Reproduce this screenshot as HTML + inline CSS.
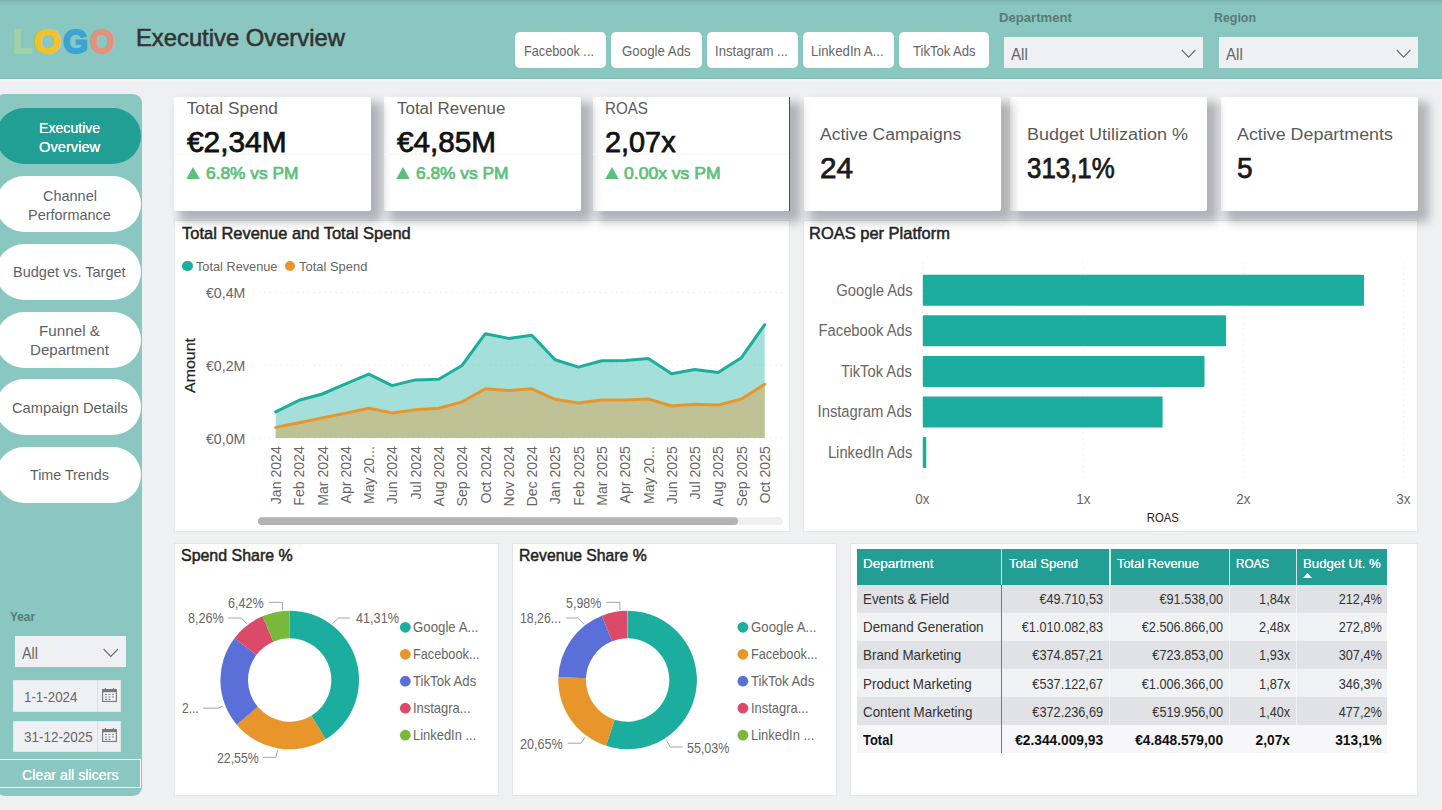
<!DOCTYPE html>
<html lang="en"><head><meta charset="utf-8"><title>Executive Overview</title>
<style>
html,body{margin:0;padding:0}body{width:1442px;height:810px;overflow:hidden;position:relative;background:#eff0f2;font-family:"Liberation Sans",sans-serif}
.b{position:absolute;display:block}
.t{position:absolute;white-space:nowrap;line-height:1;}
</style></head>
<body>
<div class="b" style="left:0px;top:0px;width:1442px;height:79px;background:linear-gradient(#79b1ad 0,#83bdb8 2px,#8ac7c1 5px,#8ac7c1 77.6px,#86bbb5 78.6px,#86bbb5 100%)"></div>
<div class="b" style="left:0px;top:79px;width:1442px;height:2px;background:linear-gradient(#f8fbfb,#eff0f2)"></div>
<div class="b" style="left:0;top:0;width:130px;height:70px">
<span class="t" style="left:12.7px;transform-origin:0 0;top:25.1px;font-size:33.8px;color:#a1d2a5;font-weight:bold;transform:scaleX(0.925);-webkit-text-stroke:2px #a1d2a5;">L</span>
<span class="t" style="left:33.9px;transform-origin:0 0;top:25.1px;font-size:33.8px;color:#f0c22b;font-weight:bold;transform:scaleX(1.031);-webkit-text-stroke:2px #f0c22b;">O</span>
<span class="t" style="left:62.6px;transform-origin:0 0;top:25.1px;font-size:33.8px;color:#3aa4d2;font-weight:bold;transform:scaleX(0.955);-webkit-text-stroke:2px #3aa4d2;">G</span>
<span class="t" style="left:89.6px;transform-origin:0 0;top:25.1px;font-size:33.8px;color:#e2937f;font-weight:bold;transform:scaleX(0.932);-webkit-text-stroke:2px #e2937f;">O</span>
</div>
<div class="t" style="left:136.0px;transform-origin:0 0;top:27.4px;font-size:23.4px;color:#333;-webkit-text-stroke:0.55px #333;transform:scaleX(1.017);">Executive Overview</div>
<div class="b" style="left:515.0px;top:32.3px;width:90.9px;height:35.3px;background:#fff;border-radius:5px"></div>
<div class="t" style="left:523.5px;transform-origin:0 0;top:43.8px;font-size:14.6px;color:#666;transform:scaleX(0.871);">Facebook ...</div>
<div class="b" style="left:610.9px;top:32.3px;width:90.9px;height:35.3px;background:#fff;border-radius:5px"></div>
<div class="t" style="left:622.3px;transform-origin:0 0;top:43.8px;font-size:14.6px;color:#666;transform:scaleX(0.911);">Google Ads</div>
<div class="b" style="left:706.8px;top:32.3px;width:90.9px;height:35.3px;background:#fff;border-radius:5px"></div>
<div class="t" style="left:715.0px;transform-origin:0 0;top:43.8px;font-size:14.6px;color:#666;transform:scaleX(0.900);">Instagram ...</div>
<div class="b" style="left:802.7px;top:32.3px;width:90.9px;height:35.3px;background:#fff;border-radius:5px"></div>
<div class="t" style="left:810.9px;transform-origin:0 0;top:43.8px;font-size:14.6px;color:#666;transform:scaleX(0.904);">LinkedIn A...</div>
<div class="b" style="left:898.6px;top:32.3px;width:90.9px;height:35.3px;background:#fff;border-radius:5px"></div>
<div class="t" style="left:912.8px;transform-origin:0 0;top:43.8px;font-size:14.6px;color:#666;transform:scaleX(0.894);">TikTok Ads</div>
<div class="t" style="left:999.0px;transform-origin:0 0;top:10.5px;font-size:13.2px;color:#587a77;font-weight:bold;transform:scaleX(0.995);">Department</div>
<div class="t" style="left:1213.7px;transform-origin:0 0;top:10.5px;font-size:13.2px;color:#587a77;font-weight:bold;transform:scaleX(0.939);">Region</div>
<div class="b" style="left:1003.8px;top:37.1px;width:198.9px;height:30.7px;background:#eff0f3"></div>
<div class="t" style="left:1011.0px;transform-origin:0 0;top:47.0px;font-size:15.6px;color:#666;transform:scaleX(0.969);">All</div>
<svg class="b" style="left:1180.6px;top:49px" width="16" height="10" viewBox="0 0 16 10"><path d="M0.8 1 L7.6 8.2 L14.4 1" fill="none" stroke="#6a6a6a" stroke-width="1.1"/></svg>
<div class="b" style="left:1218.7px;top:37.1px;width:198.9px;height:30.7px;background:#eff0f3"></div>
<div class="t" style="left:1225.9px;transform-origin:0 0;top:47.0px;font-size:15.6px;color:#666;transform:scaleX(0.969);">All</div>
<svg class="b" style="left:1395.5px;top:49px" width="16" height="10" viewBox="0 0 16 10"><path d="M0.8 1 L7.6 8.2 L14.4 1" fill="none" stroke="#6a6a6a" stroke-width="1.1"/></svg>
<div class="b" style="left:-4px;top:94.3px;width:146.2px;height:702px;background:#8ac7c1;border-radius:9px"></div>
<div class="b" style="left:-4px;top:108.1px;width:144.8px;height:56px;border-radius:28px;background:#229f95"></div>
<div class="t" style="left:38.8px;transform-origin:0 0;top:119.7px;font-size:15px;color:#fff;transform:scaleX(0.941);text-shadow:0 0 0.5px #fff;">Executive</div>
<div class="t" style="left:38.8px;transform-origin:0 0;top:138.9px;font-size:15px;color:#fff;transform:scaleX(0.979);text-shadow:0 0 0.5px #fff;">Overview</div>
<div class="b" style="left:-4px;top:175.9px;width:144.8px;height:56px;border-radius:28px;background:#fff"></div>
<div class="t" style="left:42.5px;transform-origin:0 0;top:187.5px;font-size:15px;color:#5f5f66;transform:scaleX(0.965);">Channel</div>
<div class="t" style="left:28.0px;transform-origin:0 0;top:206.7px;font-size:15px;color:#5f5f66;transform:scaleX(0.964);">Performance</div>
<div class="b" style="left:-4px;top:243.7px;width:144.8px;height:56px;border-radius:28px;background:#fff"></div>
<div class="t" style="left:13.1px;transform-origin:0 0;top:263.9px;font-size:15px;color:#5f5f66;transform:scaleX(0.967);">Budget vs. Target</div>
<div class="b" style="left:-4px;top:311.5px;width:144.8px;height:56px;border-radius:28px;background:#fff"></div>
<div class="t" style="left:39.0px;transform-origin:0 0;top:323.1px;font-size:15px;color:#5f5f66;transform:scaleX(1.014);">Funnel &amp;</div>
<div class="t" style="left:30.0px;transform-origin:0 0;top:342.3px;font-size:15px;color:#5f5f66;transform:scaleX(1.006);">Department</div>
<div class="b" style="left:-4px;top:379.3px;width:144.8px;height:56px;border-radius:28px;background:#fff"></div>
<div class="t" style="left:11.5px;transform-origin:0 0;top:399.5px;font-size:15px;color:#5f5f66;transform:scaleX(0.978);">Campaign Details</div>
<div class="b" style="left:-4px;top:447.1px;width:144.8px;height:56px;border-radius:28px;background:#fff"></div>
<div class="t" style="left:30.0px;transform-origin:0 0;top:467.3px;font-size:15px;color:#5f5f66;transform:scaleX(0.952);">Time Trends</div>
<div class="t" style="left:9.9px;transform-origin:0 0;top:609.6px;font-size:13.6px;color:#587a77;font-weight:bold;transform:scaleX(0.870);">Year</div>
<div class="b" style="left:14.8px;top:636px;width:110.9px;height:30.8px;background:#eff0f3"></div>
<div class="t" style="left:22.2px;transform-origin:0 0;top:645.6px;font-size:15.6px;color:#666;transform:scaleX(0.911);">All</div>
<svg class="b" style="left:103px;top:648px" width="16" height="10" viewBox="0 0 16 10"><path d="M0.6 1 L7.8 8.4 L15 1" fill="none" stroke="#6a6a6a" stroke-width="1.1"/></svg>
<div class="b" style="left:12.8px;top:680.4px;width:108.2px;height:31.3px;background:#eff0f3;box-shadow:inset 0 0 0 1px #e4e5e8"></div>
<div class="b" style="left:97.3px;top:680.4px;width:1px;height:31.3px;background:#dfe0e3"></div>
<div class="t" style="left:23.5px;transform-origin:0 0;top:689.6px;font-size:14.6px;color:#666;transform:scaleX(0.914);">1-1-2024</div>
<svg class="b" style="left:101.6px;top:687.8px" width="15" height="14" viewBox="0 0 15 14"><rect x="0.6" y="1.6" width="13.8" height="11.8" fill="none" stroke="#777" stroke-width="1.1"/><rect x="0.6" y="1.6" width="13.8" height="2.6" fill="#777"/><path d="M3.5 0v3M11.5 0v3" stroke="#777" stroke-width="1.2"/><path d="M3 6.5h2M6.5 6.5h2M10 6.5h2M3 9h2M6.5 9h2M10 9h2M3 11.3h2M6.5 11.3h2" stroke="#888" stroke-width="1.2"/></svg>
<div class="b" style="left:12.8px;top:720.9px;width:108.2px;height:31.3px;background:#eff0f3;box-shadow:inset 0 0 0 1px #e4e5e8"></div>
<div class="b" style="left:97.3px;top:720.9px;width:1px;height:31.3px;background:#dfe0e3"></div>
<div class="t" style="left:23.5px;transform-origin:0 0;top:730.1px;font-size:14.6px;color:#666;transform:scaleX(0.921);">31-12-2025</div>
<svg class="b" style="left:101.6px;top:728.3px" width="15" height="14" viewBox="0 0 15 14"><rect x="0.6" y="1.6" width="13.8" height="11.8" fill="none" stroke="#777" stroke-width="1.1"/><rect x="0.6" y="1.6" width="13.8" height="2.6" fill="#777"/><path d="M3.5 0v3M11.5 0v3" stroke="#777" stroke-width="1.2"/><path d="M3 6.5h2M6.5 6.5h2M10 6.5h2M3 9h2M6.5 9h2M10 9h2M3 11.3h2M6.5 11.3h2" stroke="#888" stroke-width="1.2"/></svg>
<div class="b" style="left:-2px;top:759.1px;width:143.4px;height:29.4px;border:1px solid #fff;box-sizing:border-box"></div>
<div class="t" style="left:21.6px;transform-origin:0 0;top:767.1px;font-size:15px;color:#fff;transform:scaleX(0.950);text-shadow:0 0 0.6px #fff">Clear all slicers</div>
<div class="b" style="left:174px;top:220px;width:615.5px;height:312px;background:#fff;border:1px solid #e3e5e9;box-sizing:border-box"></div>
<div class="b" style="left:802.5px;top:220px;width:615.5px;height:312px;background:#fff;border:1px solid #e3e5e9;box-sizing:border-box"></div>
<div class="b" style="left:174px;top:542.7px;width:324.5px;height:253.4px;background:#fff;border:1px solid #e3e5e9;box-sizing:border-box"></div>
<div class="b" style="left:512px;top:542.7px;width:324.5px;height:253.4px;background:#fff;border:1px solid #e3e5e9;box-sizing:border-box"></div>
<div class="b" style="left:850px;top:542.7px;width:568px;height:253.4px;background:#fff;border:1px solid #e3e5e9;box-sizing:border-box"></div>
<div class="b" style="left:1221px;top:97.1px;width:197px;height:113.5px;background:#fff;border-radius:2px;box-shadow:7.8px 7.8px 10px 2.6px rgba(10,12,30,0.265)"></div>
<div class="b" style="left:1010.3px;top:97.1px;width:197px;height:113.5px;background:#fff;border-radius:2px;box-shadow:7.8px 7.8px 10px 2.6px rgba(10,12,30,0.265)"></div>
<div class="b" style="left:804px;top:97.1px;width:197px;height:113.5px;background:#fff;border-radius:2px;box-shadow:7.8px 7.8px 10px 2.6px rgba(10,12,30,0.265)"></div>
<div class="b" style="left:593.3px;top:97.1px;width:197px;height:113.5px;background:#fff;border-radius:2px;box-shadow:7.8px 7.8px 10px 2.6px rgba(10,12,30,0.265)"></div>
<div class="b" style="left:384.3px;top:97.1px;width:197px;height:113.5px;background:#fff;border-radius:2px;box-shadow:7.8px 7.8px 10px 2.6px rgba(10,12,30,0.265)"></div>
<div class="b" style="left:174.3px;top:97.1px;width:197px;height:113.5px;background:#fff;border-radius:2px;box-shadow:7.8px 7.8px 10px 2.6px rgba(10,12,30,0.265)"></div>
<div class="b" style="left:174.3px;top:154px;width:197px;height:1px;background:#f8f8f8"></div>
<div class="t" style="left:186.7px;transform-origin:0 0;top:99.8px;font-size:17.3px;color:#5a5a5a;transform:scaleX(1.000);">Total Spend</div>
<div class="t" style="left:186.7px;transform-origin:0 0;top:127.5px;font-size:28.6px;color:#111;-webkit-text-stroke:0.75px #111;transform:scaleX(1.043);">€2,34M</div>
<svg class="b" style="left:186.1px;top:166.6px" width="14" height="12.4" viewBox="0 0 14 12.4"><path d="M7 0L14 12.4H0Z" fill="#5cc07a"/></svg>
<div class="t" style="left:205.9px;transform-origin:0 0;top:164.9px;font-size:16.4px;color:#5cc07a;-webkit-text-stroke:0.7px #5cc07a;transform:scaleX(1.058);">6.8% vs PM</div>
<div class="b" style="left:384.3px;top:154px;width:197px;height:1px;background:#f8f8f8"></div>
<div class="t" style="left:396.6px;transform-origin:0 0;top:99.8px;font-size:17.3px;color:#5a5a5a;transform:scaleX(0.981);">Total Revenue</div>
<div class="t" style="left:396.6px;transform-origin:0 0;top:127.5px;font-size:28.6px;color:#111;-webkit-text-stroke:0.75px #111;transform:scaleX(1.038);">€4,85M</div>
<svg class="b" style="left:396.0px;top:166.6px" width="14" height="12.4" viewBox="0 0 14 12.4"><path d="M7 0L14 12.4H0Z" fill="#5cc07a"/></svg>
<div class="t" style="left:415.8px;transform-origin:0 0;top:164.9px;font-size:16.4px;color:#5cc07a;-webkit-text-stroke:0.7px #5cc07a;transform:scaleX(1.058);">6.8% vs PM</div>
<div class="b" style="left:593.3px;top:154px;width:197px;height:1px;background:#f8f8f8"></div>
<div class="t" style="left:605.2px;transform-origin:0 0;top:99.8px;font-size:17.3px;color:#5a5a5a;transform:scaleX(0.877);">ROAS</div>
<div class="t" style="left:605.2px;transform-origin:0 0;top:127.5px;font-size:28.6px;color:#111;-webkit-text-stroke:0.75px #111;transform:scaleX(1.009);">2,07x</div>
<svg class="b" style="left:604.6px;top:166.6px" width="14" height="12.4" viewBox="0 0 14 12.4"><path d="M7 0L14 12.4H0Z" fill="#5cc07a"/></svg>
<div class="t" style="left:624.4px;transform-origin:0 0;top:164.9px;font-size:16.4px;color:#5cc07a;-webkit-text-stroke:0.7px #5cc07a;transform:scaleX(1.071);">0.00x vs PM</div>
<div class="b" style="left:788.8px;top:97.1px;width:1.4px;height:113.5px;background:#4a4a4a"></div>
<div class="t" style="left:820.4px;transform-origin:0 0;top:125.9px;font-size:17.3px;color:#5a5a5a;transform:scaleX(1.014);">Active Campaigns</div>
<div class="t" style="left:820.4px;transform-origin:0 0;top:153.8px;font-size:28.6px;color:#1a1a1a;-webkit-text-stroke:0.75px #1a1a1a;transform:scaleX(1.037);">24</div>
<div class="t" style="left:1026.6px;transform-origin:0 0;top:125.9px;font-size:17.3px;color:#5a5a5a;transform:scaleX(1.041);">Budget Utilization %</div>
<div class="t" style="left:1026.6px;transform-origin:0 0;top:153.8px;font-size:28.6px;color:#1a1a1a;-webkit-text-stroke:0.75px #1a1a1a;transform:scaleX(0.904);">313,1%</div>
<div class="t" style="left:1237.3px;transform-origin:0 0;top:125.9px;font-size:17.3px;color:#5a5a5a;transform:scaleX(1.034);">Active Departments</div>
<div class="t" style="left:1237.3px;transform-origin:0 0;top:153.8px;font-size:28.6px;color:#1a1a1a;-webkit-text-stroke:0.75px #1a1a1a;transform:scaleX(0.981);">5</div>
<div class="t" style="left:181.8px;transform-origin:0 0;top:225.0px;font-size:16.2px;color:#252423;-webkit-text-stroke:0.5px #252423;transform:scaleX(1.018);">Total Revenue and Total Spend</div>
<div class="b" style="left:182px;top:260.6px;width:10.6px;height:10.6px;border-radius:50%;background:#1bae9f"></div>
<div class="t" style="left:196.2px;transform-origin:0 0;top:259.5px;font-size:13.4px;color:#686664;transform:scaleX(0.951);">Total Revenue</div>
<div class="b" style="left:284.5px;top:260.6px;width:10.6px;height:10.6px;border-radius:50%;background:#e8962c"></div>
<div class="t" style="left:298.6px;transform-origin:0 0;top:259.5px;font-size:13.4px;color:#686664;transform:scaleX(0.966);">Total Spend</div>
<div class="t" style="left:206.2px;transform-origin:0 0;top:285.6px;font-size:14.2px;color:#686664;transform:scaleX(0.996);">€0,4M</div>
<div class="t" style="left:206.2px;transform-origin:0 0;top:358.6px;font-size:14.2px;color:#686664;transform:scaleX(0.996);">€0,2M</div>
<div class="t" style="left:206.2px;transform-origin:0 0;top:431.6px;font-size:14.2px;color:#686664;transform:scaleX(0.996);">€0,0M</div>
<svg class="b" style="left:0;top:0" width="1442" height="810" viewBox="0 0 1442 810"><line x1="253" x2="783" y1="292.4" y2="292.4" stroke="#ececec" stroke-width="1" stroke-dasharray="1.5 4"/><line x1="253" x2="783" y1="365.2" y2="365.2" stroke="#ececec" stroke-width="1" stroke-dasharray="1.5 4"/><line x1="253" x2="783" y1="438" y2="438" stroke="#ececec" stroke-width="1" stroke-dasharray="1.5 4"/><polygon points="275.7,438 275.7,411.9 299.0,400.3 322.3,394.0 345.6,383.9 368.8,374.1 392.1,385.6 415.4,379.9 438.7,379.3 462.0,365.5 485.3,333.7 508.6,338.4 531.8,335.2 555.1,359.8 578.4,367.1 601.7,360.8 625.0,360.4 648.3,358.5 671.6,373.8 694.8,369.6 718.1,372.4 741.4,357.7 764.7,324.7 764.7,438" fill="#1bae9f" fill-opacity="0.4"/><polygon points="275.7,438 275.7,427.4 299.0,422.8 322.3,417.9 345.6,413.1 368.8,408.3 392.1,412.9 415.4,409.8 438.7,408.3 462.0,402.0 485.3,388.8 508.6,390.4 531.8,388.8 555.1,399.3 578.4,403.0 601.7,400.1 625.0,399.9 648.3,399.0 671.6,406.0 694.8,404.3 718.1,405.1 741.4,399.0 764.7,384.3 764.7,438" fill="#e8962c" fill-opacity="0.4"/><polyline points="275.7,411.9 299.0,400.3 322.3,394.0 345.6,383.9 368.8,374.1 392.1,385.6 415.4,379.9 438.7,379.3 462.0,365.5 485.3,333.7 508.6,338.4 531.8,335.2 555.1,359.8 578.4,367.1 601.7,360.8 625.0,360.4 648.3,358.5 671.6,373.8 694.8,369.6 718.1,372.4 741.4,357.7 764.7,324.7" fill="none" stroke="#1bae9f" stroke-width="3" stroke-linejoin="round" stroke-linecap="round"/><polyline points="275.7,427.4 299.0,422.8 322.3,417.9 345.6,413.1 368.8,408.3 392.1,412.9 415.4,409.8 438.7,408.3 462.0,402.0 485.3,388.8 508.6,390.4 531.8,388.8 555.1,399.3 578.4,403.0 601.7,400.1 625.0,399.9 648.3,399.0 671.6,406.0 694.8,404.3 718.1,405.1 741.4,399.0 764.7,384.3" fill="none" stroke="#e8962c" stroke-width="3" stroke-linejoin="round" stroke-linecap="round"/><text transform="translate(281.0,446.2) rotate(-90)" text-anchor="end" font-size="14.6" fill="#686664" textLength="58.0" lengthAdjust="spacingAndGlyphs">Jan 2024</text><text transform="translate(304.3,446.2) rotate(-90)" text-anchor="end" font-size="14.6" fill="#686664" textLength="59.5" lengthAdjust="spacingAndGlyphs">Feb 2024</text><text transform="translate(327.6,446.2) rotate(-90)" text-anchor="end" font-size="14.6" fill="#686664" textLength="59.5" lengthAdjust="spacingAndGlyphs">Mar 2024</text><text transform="translate(350.9,446.2) rotate(-90)" text-anchor="end" font-size="14.6" fill="#686664" textLength="57.2" lengthAdjust="spacingAndGlyphs">Apr 2024</text><text transform="translate(374.1,446.2) rotate(-90)" text-anchor="end" font-size="14.6" fill="#686664" textLength="57.9" lengthAdjust="spacingAndGlyphs">May 20...</text><text transform="translate(397.4,446.2) rotate(-90)" text-anchor="end" font-size="14.6" fill="#686664" textLength="58.0" lengthAdjust="spacingAndGlyphs">Jun 2024</text><text transform="translate(420.7,446.2) rotate(-90)" text-anchor="end" font-size="14.6" fill="#686664" textLength="53.3" lengthAdjust="spacingAndGlyphs">Jul 2024</text><text transform="translate(444.0,446.2) rotate(-90)" text-anchor="end" font-size="14.6" fill="#686664" textLength="60.3" lengthAdjust="spacingAndGlyphs">Aug 2024</text><text transform="translate(467.3,446.2) rotate(-90)" text-anchor="end" font-size="14.6" fill="#686664" textLength="60.3" lengthAdjust="spacingAndGlyphs">Sep 2024</text><text transform="translate(490.6,446.2) rotate(-90)" text-anchor="end" font-size="14.6" fill="#686664" textLength="57.2" lengthAdjust="spacingAndGlyphs">Oct 2024</text><text transform="translate(513.9,446.2) rotate(-90)" text-anchor="end" font-size="14.6" fill="#686664" textLength="60.3" lengthAdjust="spacingAndGlyphs">Nov 2024</text><text transform="translate(537.1,446.2) rotate(-90)" text-anchor="end" font-size="14.6" fill="#686664" textLength="60.3" lengthAdjust="spacingAndGlyphs">Dec 2024</text><text transform="translate(560.4,446.2) rotate(-90)" text-anchor="end" font-size="14.6" fill="#686664" textLength="58.0" lengthAdjust="spacingAndGlyphs">Jan 2025</text><text transform="translate(583.7,446.2) rotate(-90)" text-anchor="end" font-size="14.6" fill="#686664" textLength="59.5" lengthAdjust="spacingAndGlyphs">Feb 2025</text><text transform="translate(607.0,446.2) rotate(-90)" text-anchor="end" font-size="14.6" fill="#686664" textLength="59.5" lengthAdjust="spacingAndGlyphs">Mar 2025</text><text transform="translate(630.3,446.2) rotate(-90)" text-anchor="end" font-size="14.6" fill="#686664" textLength="57.2" lengthAdjust="spacingAndGlyphs">Apr 2025</text><text transform="translate(653.6,446.2) rotate(-90)" text-anchor="end" font-size="14.6" fill="#686664" textLength="57.9" lengthAdjust="spacingAndGlyphs">May 20...</text><text transform="translate(676.9,446.2) rotate(-90)" text-anchor="end" font-size="14.6" fill="#686664" textLength="58.0" lengthAdjust="spacingAndGlyphs">Jun 2025</text><text transform="translate(700.1,446.2) rotate(-90)" text-anchor="end" font-size="14.6" fill="#686664" textLength="53.3" lengthAdjust="spacingAndGlyphs">Jul 2025</text><text transform="translate(723.4,446.2) rotate(-90)" text-anchor="end" font-size="14.6" fill="#686664" textLength="60.3" lengthAdjust="spacingAndGlyphs">Aug 2025</text><text transform="translate(746.7,446.2) rotate(-90)" text-anchor="end" font-size="14.6" fill="#686664" textLength="60.3" lengthAdjust="spacingAndGlyphs">Sep 2025</text><text transform="translate(770.0,446.2) rotate(-90)" text-anchor="end" font-size="14.6" fill="#686664" textLength="57.2" lengthAdjust="spacingAndGlyphs">Oct 2025</text><text transform="translate(194.8,365.5) rotate(-90)" text-anchor="middle" font-size="15.2" fill="#252423" textLength="55" lengthAdjust="spacingAndGlyphs" stroke="#252423" stroke-width="0.2">Amount</text><rect x="258" y="517.2" width="525" height="7.8" rx="3.9" fill="#f0f0f0"/><rect x="258" y="517.2" width="480" height="7.8" rx="3.9" fill="#b3b3b3"/><line x1="922.8" x2="922.8" y1="262" y2="480" stroke="#ececec" stroke-width="1" stroke-dasharray="1.5 4"/><line x1="1083" x2="1083" y1="262" y2="480" stroke="#ececec" stroke-width="1" stroke-dasharray="1.5 4"/><line x1="1243.3" x2="1243.3" y1="262" y2="480" stroke="#ececec" stroke-width="1" stroke-dasharray="1.5 4"/><line x1="1403.5" x2="1403.5" y1="262" y2="480" stroke="#ececec" stroke-width="1" stroke-dasharray="1.5 4"/><rect x="922.8" y="274.8" width="441.2" height="31" rx="0.8" fill="#1bae9f"/><rect x="922.8" y="315.35" width="303.2" height="31" rx="0.8" fill="#1bae9f"/><rect x="922.8" y="355.9" width="281.7" height="31" rx="0.8" fill="#1bae9f"/><rect x="922.8" y="396.45" width="239.8" height="31" rx="0.8" fill="#1bae9f"/><rect x="922.8" y="437.0" width="3.5" height="31" rx="0.8" fill="#1bae9f"/></svg>
<div class="t" style="left:808.8px;transform-origin:0 0;top:225.0px;font-size:16.2px;color:#252423;-webkit-text-stroke:0.5px #252423;transform:scaleX(1.017);">ROAS per Platform</div>
<div class="t" style="left:830.5px;transform-origin:100% 0;top:282.7px;font-size:15.8px;color:#686664;transform:scaleX(0.935);">Google Ads</div>
<div class="t" style="left:812.1px;transform-origin:100% 0;top:323.3px;font-size:15.8px;color:#686664;transform:scaleX(0.935);">Facebook Ads</div>
<div class="t" style="left:836.4px;transform-origin:100% 0;top:363.8px;font-size:15.8px;color:#686664;transform:scaleX(0.935);">TikTok Ads</div>
<div class="t" style="left:811.2px;transform-origin:100% 0;top:404.4px;font-size:15.8px;color:#686664;transform:scaleX(0.935);">Instagram Ads</div>
<div class="t" style="left:821.7px;transform-origin:100% 0;top:444.9px;font-size:15.8px;color:#686664;transform:scaleX(0.935);">LinkedIn Ads</div>
<div class="t" style="left:915.3px;transform-origin:50% 0;top:492.0px;font-size:14.2px;color:#686664;transform:scaleX(0.950);">0x</div>
<div class="t" style="left:1075.5px;transform-origin:50% 0;top:492.0px;font-size:14.2px;color:#686664;transform:scaleX(0.950);">1x</div>
<div class="t" style="left:1235.8px;transform-origin:50% 0;top:492.0px;font-size:14.2px;color:#686664;transform:scaleX(0.950);">2x</div>
<div class="t" style="left:1396.0px;transform-origin:50% 0;top:492.0px;font-size:14.2px;color:#686664;transform:scaleX(0.950);">3x</div>
<div class="t" style="left:1145.1px;transform-origin:50% 0;top:512.3px;font-size:12.6px;color:#252423;transform:scaleX(0.900);">ROAS</div>
<svg class="b" style="left:0;top:0" width="1442" height="810" viewBox="0 0 1442 810"><path d="M289.70 610.70A69.3 69.3 0 0 1 325.69 739.22L311.35 715.64A41.7 41.7 0 0 0 289.70 638.30Z" fill="#1bae9f"/><path d="M325.69 739.22A69.3 69.3 0 0 1 236.69 724.64L257.80 706.86A41.7 41.7 0 0 0 311.35 715.64Z" fill="#e8962c"/><path d="M236.69 724.64A69.3 69.3 0 0 1 234.47 638.15L256.46 654.82A41.7 41.7 0 0 0 257.80 706.86Z" fill="#5b6fd8"/><path d="M234.47 638.15A69.3 69.3 0 0 1 262.50 616.26L273.33 641.65A41.7 41.7 0 0 0 256.46 654.82Z" fill="#dc4a69"/><path d="M262.50 616.26A69.3 69.3 0 0 1 289.70 610.70L289.70 638.30A41.7 41.7 0 0 0 273.33 641.65Z" fill="#78b83a"/><path d="M627.60 610.70A69.3 69.3 0 1 1 606.06 745.87L614.64 719.63A41.7 41.7 0 1 0 627.60 638.30Z" fill="#1bae9f"/><path d="M606.06 745.87A69.3 69.3 0 0 1 558.36 677.04L585.94 678.22A41.7 41.7 0 0 0 614.64 719.63Z" fill="#e8962c"/><path d="M558.36 677.04A69.3 69.3 0 0 1 601.85 615.66L612.10 641.29A41.7 41.7 0 0 0 585.94 678.22Z" fill="#5b6fd8"/><path d="M601.85 615.66A69.3 69.3 0 0 1 627.25 610.70L627.39 638.30A41.7 41.7 0 0 0 612.10 641.29Z" fill="#dc4a69"/><path d="M332.1 624.1L338.5 618H349.8" fill="none" stroke="#a6a6a6" stroke-width="1"/><path d="M268.9 602.3H282.4V610" fill="none" stroke="#a6a6a6" stroke-width="1"/><path d="M228.1 618H241.3L247 624.1" fill="none" stroke="#a6a6a6" stroke-width="1"/><path d="M203 708.2H218.2L223 706" fill="none" stroke="#a6a6a6" stroke-width="1"/><path d="M263.1 757.3H275.9L277.5 750.3" fill="none" stroke="#a6a6a6" stroke-width="1"/><path d="M606.1 602.3H619.9V610" fill="none" stroke="#a6a6a6" stroke-width="1"/><path d="M566 618H578.2L584 624.1" fill="none" stroke="#a6a6a6" stroke-width="1"/><path d="M567.6 743.2H581.1L585.3 736.8" fill="none" stroke="#a6a6a6" stroke-width="1"/><path d="M666.5 740.6L670.3 747H682.5" fill="none" stroke="#a6a6a6" stroke-width="1"/><circle cx="405.3" cy="627.3" r="5.4" fill="#1bae9f"/><circle cx="405.3" cy="654.3" r="5.4" fill="#e8962c"/><circle cx="405.3" cy="681.2" r="5.4" fill="#5b6fd8"/><circle cx="405.3" cy="708.2" r="5.4" fill="#dc4a69"/><circle cx="405.3" cy="735.2" r="5.4" fill="#78b83a"/><circle cx="742.9" cy="627.3" r="5.4" fill="#1bae9f"/><circle cx="742.9" cy="654.3" r="5.4" fill="#e8962c"/><circle cx="742.9" cy="681.2" r="5.4" fill="#5b6fd8"/><circle cx="742.9" cy="708.2" r="5.4" fill="#dc4a69"/><circle cx="742.9" cy="735.2" r="5.4" fill="#78b83a"/></svg>
<div class="t" style="left:181.2px;transform-origin:0 0;top:547.2px;font-size:16.2px;color:#252423;-webkit-text-stroke:0.5px #252423;transform:scaleX(0.985);">Spend Share %</div>
<div class="t" style="left:519.4px;transform-origin:0 0;top:547.2px;font-size:16.2px;color:#252423;-webkit-text-stroke:0.5px #252423;transform:scaleX(0.972);">Revenue Share %</div>
<div class="t" style="left:355.6px;transform-origin:0 0;top:610.6px;font-size:14.4px;color:#686664;transform:scaleX(0.880);">41,31%</div>
<div class="t" style="left:228.4px;transform-origin:0 0;top:595.8px;font-size:14.4px;color:#686664;transform:scaleX(0.874);">6,42%</div>
<div class="t" style="left:187.7px;transform-origin:0 0;top:611.3px;font-size:14.4px;color:#686664;transform:scaleX(0.879);">8,26%</div>
<div class="t" style="left:181.6px;transform-origin:0 0;top:701.2px;font-size:14.4px;color:#686664;transform:scaleX(0.830);">2...</div>
<div class="t" style="left:216.5px;transform-origin:0 0;top:750.9px;font-size:14.4px;color:#686664;transform:scaleX(0.856);">22,55%</div>
<div class="t" style="left:566.0px;transform-origin:0 0;top:595.8px;font-size:14.4px;color:#686664;transform:scaleX(0.865);">5,98%</div>
<div class="t" style="left:520.1px;transform-origin:0 0;top:611.3px;font-size:14.4px;color:#686664;transform:scaleX(0.856);">18,26...</div>
<div class="t" style="left:520.1px;transform-origin:0 0;top:736.5px;font-size:14.4px;color:#686664;transform:scaleX(0.874);">20,65%</div>
<div class="t" style="left:687.3px;transform-origin:0 0;top:740.6px;font-size:14.4px;color:#686664;transform:scaleX(0.868);">55,03%</div>
<div class="t" style="left:413.3px;transform-origin:0 0;top:620.1px;font-size:14.6px;color:#686664;transform:scaleX(0.907);">Google A...</div>
<div class="t" style="left:413.3px;transform-origin:0 0;top:647.1px;font-size:14.6px;color:#686664;transform:scaleX(0.872);">Facebook...</div>
<div class="t" style="left:413.3px;transform-origin:0 0;top:674.1px;font-size:14.6px;color:#686664;transform:scaleX(0.904);">TikTok Ads</div>
<div class="t" style="left:413.3px;transform-origin:0 0;top:701.1px;font-size:14.6px;color:#686664;transform:scaleX(0.886);">Instagra...</div>
<div class="t" style="left:413.3px;transform-origin:0 0;top:728.0px;font-size:14.6px;color:#686664;transform:scaleX(0.886);">LinkedIn ...</div>
<div class="t" style="left:751.2px;transform-origin:0 0;top:620.1px;font-size:14.6px;color:#686664;transform:scaleX(0.907);">Google A...</div>
<div class="t" style="left:751.2px;transform-origin:0 0;top:647.1px;font-size:14.6px;color:#686664;transform:scaleX(0.872);">Facebook...</div>
<div class="t" style="left:751.2px;transform-origin:0 0;top:674.1px;font-size:14.6px;color:#686664;transform:scaleX(0.904);">TikTok Ads</div>
<div class="t" style="left:751.2px;transform-origin:0 0;top:701.1px;font-size:14.6px;color:#686664;transform:scaleX(0.886);">Instagra...</div>
<div class="t" style="left:751.2px;transform-origin:0 0;top:728.0px;font-size:14.6px;color:#686664;transform:scaleX(0.886);">LinkedIn ...</div>
<div class="b" style="left:857.3px;top:548.9px;width:529.7px;height:35.9px;background:#239e94"></div>
<div class="b" style="left:1000.6px;top:548.9px;width:1.3px;height:35.9px;background:#cfeae6"></div>
<div class="b" style="left:1109.3000000000002px;top:548.9px;width:1.3px;height:35.9px;background:#cfeae6"></div>
<div class="b" style="left:1229.0px;top:548.9px;width:1.3px;height:35.9px;background:#cfeae6"></div>
<div class="b" style="left:1295.5px;top:548.9px;width:1.3px;height:35.9px;background:#cfeae6"></div>
<div class="t" style="left:862.8px;transform-origin:0 0;top:556.9px;font-size:13.6px;color:#fff;transform:scaleX(0.994);text-shadow:0 0 0.5px #fff">Department</div>
<div class="t" style="left:1008.5px;transform-origin:0 0;top:556.9px;font-size:13.6px;color:#fff;transform:scaleX(0.961);text-shadow:0 0 0.5px #fff">Total Spend</div>
<div class="t" style="left:1116.8px;transform-origin:0 0;top:556.9px;font-size:13.6px;color:#fff;transform:scaleX(0.942);text-shadow:0 0 0.5px #fff">Total Revenue</div>
<div class="t" style="left:1235.7px;transform-origin:0 0;top:556.9px;font-size:13.6px;color:#fff;transform:scaleX(0.861);text-shadow:0 0 0.5px #fff">ROAS</div>
<div class="t" style="left:1302.6px;transform-origin:0 0;top:556.9px;font-size:13.6px;color:#fff;transform:scaleX(0.972);text-shadow:0 0 0.5px #fff">Budget Ut. %</div>
<svg class="b" style="left:1302.6px;top:573px" width="9" height="5" viewBox="0 0 9 5"><path d="M0 5L4.5 0L9 5Z" fill="#fff"/></svg>
<div class="b" style="left:857.3px;top:584.8px;width:529.7px;height:28.1px;background:#e1e2e5"></div>
<div class="b" style="left:1109.4px;top:584.8px;width:1px;height:28.1px;background:rgba(255,255,255,0.5)"></div>
<div class="b" style="left:1229.1px;top:584.8px;width:1px;height:28.1px;background:rgba(255,255,255,0.5)"></div>
<div class="b" style="left:1295.6px;top:584.8px;width:1px;height:28.1px;background:rgba(255,255,255,0.5)"></div>
<div class="t" style="left:862.8px;transform-origin:0 0;top:591.5px;font-size:14.4px;color:#333;transform:scaleX(0.930);">Events &amp; Field</div>
<div class="t" style="left:1031.3px;transform-origin:100% 0;top:591.5px;font-size:14.4px;color:#333;transform:scaleX(0.883);">€49.710,53</div>
<div class="t" style="left:1151.0px;transform-origin:100% 0;top:591.5px;font-size:14.4px;color:#333;transform:scaleX(0.883);">€91.538,00</div>
<div class="t" style="left:1254.8px;transform-origin:100% 0;top:591.5px;font-size:14.4px;color:#333;transform:scaleX(0.883);">1,84x</div>
<div class="t" style="left:1332.5px;transform-origin:100% 0;top:591.5px;font-size:14.4px;color:#333;transform:scaleX(0.883);">212,4%</div>
<div class="b" style="left:857.3px;top:612.9px;width:529.7px;height:28.1px;background:#f1f2f4"></div>
<div class="b" style="left:1109.4px;top:612.9px;width:1px;height:28.1px;background:rgba(255,255,255,0.5)"></div>
<div class="b" style="left:1229.1px;top:612.9px;width:1px;height:28.1px;background:rgba(255,255,255,0.5)"></div>
<div class="b" style="left:1295.6px;top:612.9px;width:1px;height:28.1px;background:rgba(255,255,255,0.5)"></div>
<div class="t" style="left:862.8px;transform-origin:0 0;top:619.8px;font-size:14.4px;color:#333;transform:scaleX(0.930);">Demand Generation</div>
<div class="t" style="left:1011.3px;transform-origin:100% 0;top:619.8px;font-size:14.4px;color:#333;transform:scaleX(0.883);">€1.010.082,83</div>
<div class="t" style="left:1131.0px;transform-origin:100% 0;top:619.8px;font-size:14.4px;color:#333;transform:scaleX(0.883);">€2.506.866,00</div>
<div class="t" style="left:1254.8px;transform-origin:100% 0;top:619.8px;font-size:14.4px;color:#333;transform:scaleX(0.883);">2,48x</div>
<div class="t" style="left:1332.5px;transform-origin:100% 0;top:619.8px;font-size:14.4px;color:#333;transform:scaleX(0.883);">272,8%</div>
<div class="b" style="left:857.3px;top:641.0px;width:529.7px;height:28.1px;background:#e1e2e5"></div>
<div class="b" style="left:1109.4px;top:641.0px;width:1px;height:28.1px;background:rgba(255,255,255,0.5)"></div>
<div class="b" style="left:1229.1px;top:641.0px;width:1px;height:28.1px;background:rgba(255,255,255,0.5)"></div>
<div class="b" style="left:1295.6px;top:641.0px;width:1px;height:28.1px;background:rgba(255,255,255,0.5)"></div>
<div class="t" style="left:862.8px;transform-origin:0 0;top:648.2px;font-size:14.4px;color:#333;transform:scaleX(0.930);">Brand Marketing</div>
<div class="t" style="left:1023.3px;transform-origin:100% 0;top:648.2px;font-size:14.4px;color:#333;transform:scaleX(0.883);">€374.857,21</div>
<div class="t" style="left:1143.0px;transform-origin:100% 0;top:648.2px;font-size:14.4px;color:#333;transform:scaleX(0.883);">€723.853,00</div>
<div class="t" style="left:1254.8px;transform-origin:100% 0;top:648.2px;font-size:14.4px;color:#333;transform:scaleX(0.883);">1,93x</div>
<div class="t" style="left:1332.5px;transform-origin:100% 0;top:648.2px;font-size:14.4px;color:#333;transform:scaleX(0.883);">307,4%</div>
<div class="b" style="left:857.3px;top:669.1px;width:529.7px;height:28.1px;background:#f1f2f4"></div>
<div class="b" style="left:1109.4px;top:669.1px;width:1px;height:28.1px;background:rgba(255,255,255,0.5)"></div>
<div class="b" style="left:1229.1px;top:669.1px;width:1px;height:28.1px;background:rgba(255,255,255,0.5)"></div>
<div class="b" style="left:1295.6px;top:669.1px;width:1px;height:28.1px;background:rgba(255,255,255,0.5)"></div>
<div class="t" style="left:862.8px;transform-origin:0 0;top:676.6px;font-size:14.4px;color:#333;transform:scaleX(0.930);">Product Marketing</div>
<div class="t" style="left:1023.3px;transform-origin:100% 0;top:676.6px;font-size:14.4px;color:#333;transform:scaleX(0.883);">€537.122,67</div>
<div class="t" style="left:1131.0px;transform-origin:100% 0;top:676.6px;font-size:14.4px;color:#333;transform:scaleX(0.883);">€1.006.366,00</div>
<div class="t" style="left:1254.8px;transform-origin:100% 0;top:676.6px;font-size:14.4px;color:#333;transform:scaleX(0.883);">1,87x</div>
<div class="t" style="left:1332.5px;transform-origin:100% 0;top:676.6px;font-size:14.4px;color:#333;transform:scaleX(0.883);">346,3%</div>
<div class="b" style="left:857.3px;top:697.2px;width:529.7px;height:28.1px;background:#e1e2e5"></div>
<div class="b" style="left:1109.4px;top:697.2px;width:1px;height:28.1px;background:rgba(255,255,255,0.5)"></div>
<div class="b" style="left:1229.1px;top:697.2px;width:1px;height:28.1px;background:rgba(255,255,255,0.5)"></div>
<div class="b" style="left:1295.6px;top:697.2px;width:1px;height:28.1px;background:rgba(255,255,255,0.5)"></div>
<div class="t" style="left:862.8px;transform-origin:0 0;top:704.9px;font-size:14.4px;color:#333;transform:scaleX(0.930);">Content Marketing</div>
<div class="t" style="left:1023.3px;transform-origin:100% 0;top:704.9px;font-size:14.4px;color:#333;transform:scaleX(0.883);">€372.236,69</div>
<div class="t" style="left:1143.0px;transform-origin:100% 0;top:704.9px;font-size:14.4px;color:#333;transform:scaleX(0.883);">€519.956,00</div>
<div class="t" style="left:1254.8px;transform-origin:100% 0;top:704.9px;font-size:14.4px;color:#333;transform:scaleX(0.883);">1,40x</div>
<div class="t" style="left:1332.5px;transform-origin:100% 0;top:704.9px;font-size:14.4px;color:#333;transform:scaleX(0.883);">477,2%</div>
<div class="b" style="left:857.3px;top:725.3px;width:529.7px;height:28.1px;background:#f7f7f9"></div>
<div class="t" style="left:862.8px;transform-origin:0 0;top:733.3px;font-size:14.4px;color:#111;font-weight:bold;transform:scaleX(0.900);">Total</div>
<div class="t" style="left:1011.3px;transform-origin:100% 0;top:733.3px;font-size:14.4px;color:#111;font-weight:bold;transform:scaleX(0.955);">€2.344.009,93</div>
<div class="t" style="left:1131.0px;transform-origin:100% 0;top:733.3px;font-size:14.4px;color:#111;font-weight:bold;transform:scaleX(0.955);">€4.848.579,00</div>
<div class="t" style="left:1254.0px;transform-origin:100% 0;top:733.3px;font-size:14.4px;color:#111;font-weight:bold;transform:scaleX(0.955);">2,07x</div>
<div class="t" style="left:1332.5px;transform-origin:100% 0;top:733.3px;font-size:14.4px;color:#111;font-weight:bold;transform:scaleX(0.955);">313,1%</div>
<div class="b" style="left:1000.7px;top:584.8px;width:1.2px;height:168.6px;background:#239e94"></div>
</body></html>
